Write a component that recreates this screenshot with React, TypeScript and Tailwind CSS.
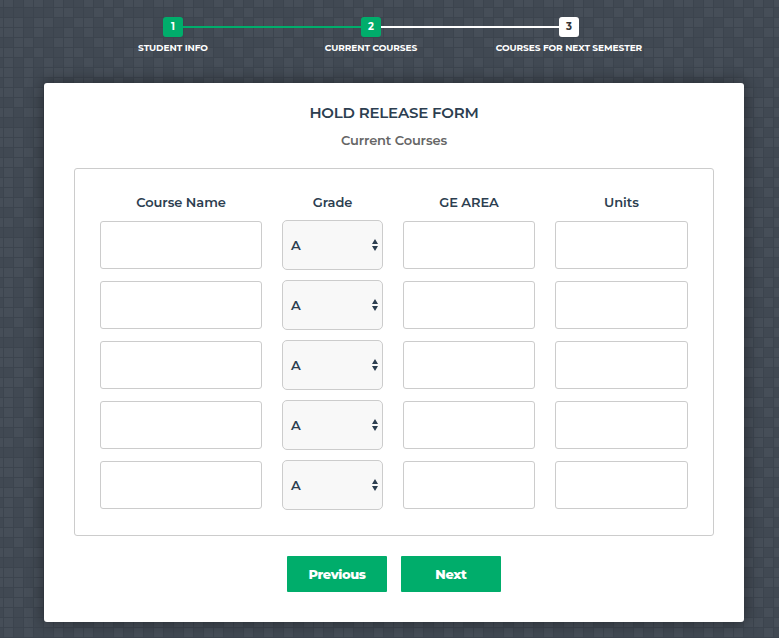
import React from "react";

const tile = [
  "0000011001010",
  "1101100110101",
  "1101001010011",
  "0110011001100",
  "1101001100101",
  "1010101010010",
  "1010111001101",
  "1010010110010",
  "1101001011001",
  "0100110100110",
  "1011010010101",
];

function Backdrop() {
  return (
    <svg className="absolute inset-0 h-full w-full" aria-hidden="true">
      <defs>
        <pattern id="squares" x="3" y="7" width="130" height="110" patternUnits="userSpaceOnUse">
          <rect width="130" height="110" fill="#3c444e" />
          {tile.map((row, y) =>
            row.split("").map((c, x) => (
              <rect key={`${x}-${y}`} x={x * 10 + 1} y={y * 10 + 1} width="9" height="9" fill={c === "1" ? "#464e58" : "#414953"} />
            )),
          )}
        </pattern>
      </defs>
      <rect width="100%" height="100%" fill="url(#squares)" />
    </svg>
  );
}

function Step({ n, label, done }: { n: number; label: string; done: boolean }) {
  return (
    <li className="relative flex w-[198px] flex-col items-center">
      {n > 1 && <span className={`absolute top-[9px] right-[109px] h-[2px] w-[178px] ${n === 2 ? "bg-[#00ad6b]" : "bg-white"}`} />}
      <span className={`flex h-5 w-5 items-center justify-center rounded-[3px] pb-px text-[10px] font-bold ${done ? "bg-[#00ad6b] text-white" : "bg-white text-[#333]"}`}>{n}</span>
      <span className="mt-[5px] text-[9px] leading-3 font-bold tracking-[-0.06px] whitespace-nowrap text-white">{label}</span>
    </li>
  );
}

function Heading({ children }: { children: React.ReactNode }) {
  return <div className="h-[17px] text-center text-[13px] leading-[19px] font-semibold tracking-[-0.06px]">{children}</div>;
}

function Field() {
  return <input className="my-px block h-12 w-full rounded-[3px] border border-[#ccc] bg-white outline-none" />;
}

function Grade() {
  return (
    <div className="flex h-[50px] items-center justify-between rounded-[5px] border border-[#ccc] bg-[#f8f8f8] pr-[4px] pl-2 text-[13px] font-semibold">
      <span className="pt-px">A</span>
      <svg width="6" height="12" viewBox="0 0 6 12" fill="#2c3e50">
        <path d="M3 0 6 5H0zM0 7h6L3 12z" />
      </svg>
    </div>
  );
}

const rows = [1, 2, 3, 4, 5];

export default function App() {
  return (
    <div className="relative h-[638px] w-[779px] overflow-hidden bg-[#404852] font-['Montserrat','Inter',sans-serif] text-[#2c3e50]">
      <Backdrop />
      <div className="relative flex flex-col pt-[17px] pl-[44px]">
        <ol className="ml-[30px] flex h-[66px]">
          <Step n={1} label="STUDENT INFO" done />
          <Step n={2} label="CURRENT COURSES" done />
          <Step n={3} label="COURSES FOR NEXT SEMESTER" done={false} />
        </ol>
        <main className="flex h-[539px] w-[700px] flex-col items-center rounded-[3px] bg-white px-[30px] pt-5 shadow-[0_0_15px_1px_rgba(0,0,0,0.4)]">
          <h2 className="text-[15px] leading-5 font-semibold tracking-[-0.2px]">HOLD RELEASE FORM</h2>
          <h3 className="mt-2 text-[13px] leading-[18px] font-semibold tracking-[-0.13px] text-[#666]">Current Courses</h3>
          <section className="mt-[19px] h-[368px] w-full rounded-[3px] border border-[#ccc] px-[25px] pt-[24px]">
            <div className="grid grid-cols-[162px_101px_132px_133px] gap-x-5 gap-y-[10px]">
              <Heading>Course Name</Heading>
              <Heading>Grade</Heading>
              <Heading>GE AREA</Heading>
              <Heading>Units</Heading>
              {rows.map((r) => (
                <React.Fragment key={r}>
                  <Field />
                  <Grade />
                  <Field />
                  <Field />
                </React.Fragment>
              ))}
            </div>
          </section>
          <div className="mt-5 flex gap-[14px]">
            <button className="h-9 w-[100px] rounded-[1px] bg-[#00ad6b] pt-0.5 text-[13px] font-extrabold tracking-[-0.4px] text-white">Previous</button>
            <button className="h-9 w-[100px] rounded-[1px] bg-[#00ad6b] pt-0.5 text-[13px] font-extrabold tracking-[-0.3px] text-white">Next</button>
          </div>
        </main>
      </div>
    </div>
  );
}
